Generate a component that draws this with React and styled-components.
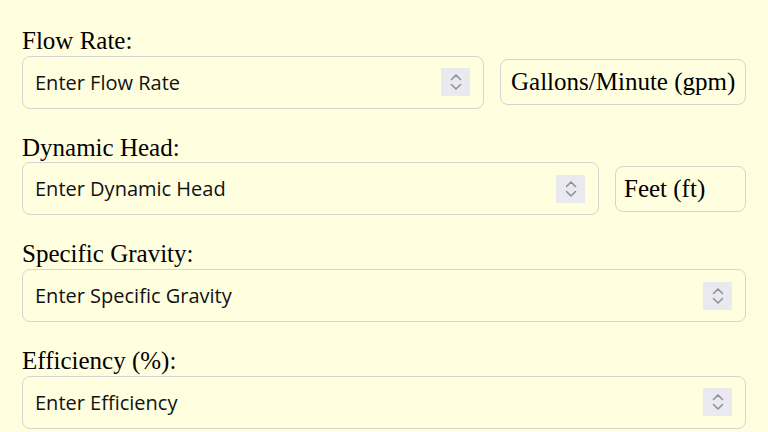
import React from "react";
import styled, { createGlobalStyle } from "styled-components";

const Global = createGlobalStyle`
  html, body { margin: 0; padding: 0; background: #ffffe0; }
  body { font-family: "Liberation Serif", "Times New Roman", serif; color: #000; }
`;

const Page = styled.div`
  padding: 27px 22px 0 22px;
  display: flex;
  flex-direction: column;
  gap: 25px;
`;

const Group = styled.div`
  display: flex;
  flex-direction: column;
`;

const Label = styled.label`
  font-size: 25px;
  line-height: 1.149;
  color: #000;
`;

const Row = styled.div`
  display: flex;
  align-items: center;
  gap: 16px;
`;

const Field = styled.div`
  flex: 1;
  height: 53px;
  box-sizing: border-box;
  border: 1.5px solid #d4d4d4;
  border-radius: 8px;
  background: #ffffe0;
  display: flex;
  align-items: center;
  padding: 0 13px 0 12px;
`;

const Input = styled.input`
  flex: 1;
  min-width: 0;
  border: none;
  outline: none;
  background: transparent;
  padding: 0;
  font-family: "Open Sans", "Noto Sans", sans-serif;
  font-size: 20px;
  font-weight: 500;
  color: #111;
  &::placeholder { color: #111; opacity: 1; }
`;

const Spinner = styled.span`
  width: 29px;
  height: 28px;
  background: #e9e9ef;
  display: flex;
  align-items: center;
  justify-content: center;
  flex-shrink: 0;
`;

const Unit = styled.div`
  width: ${(p) => p.$w}px;
  height: 46px;
  box-sizing: border-box;
  border: 1.5px solid #d4d4d4;
  border-radius: 8px;
  background: #ffffe0;
  display: flex;
  align-items: center;
  padding: 0 8px 0 ${(p) => p.$pl}px;
  font-size: 25px;
  white-space: nowrap;
  color: #000;
`;

function Arrows() {
  return (
    <svg width="16" height="22" viewBox="0 0 16 22" fill="none" stroke="#8e8e98" strokeWidth="1.5" strokeLinecap="round" strokeLinejoin="round">
      <path d="M3.5 8.5 L8 4 L12.5 8.5" />
      <path d="M3.5 13.5 L8 18 L12.5 13.5" />
    </svg>
  );
}

function NumberField({ placeholder }) {
  return (
    <Field>
      <Input type="text" placeholder={placeholder} />
      <Spinner><Arrows /></Spinner>
    </Field>
  );
}

export default function App() {
  return (
    <>
      <Global />
      <Page>
        <Group>
          <Label>Flow Rate:</Label>
          <Row>
            <NumberField placeholder="Enter Flow Rate" />
            <Unit $w={246} $pl={10}>Gallons/Minute (gpm)</Unit>
          </Row>
        </Group>
        <Group>
          <Label>Dynamic Head:</Label>
          <Row>
            <NumberField placeholder="Enter Dynamic Head" />
            <Unit $w={131} $pl={8}>Feet (ft)</Unit>
          </Row>
        </Group>
        <Group>
          <Label>Specific Gravity:</Label>
          <Row>
            <NumberField placeholder="Enter Specific Gravity" />
          </Row>
        </Group>
        <Group>
          <Label>Efficiency (%):</Label>
          <Row>
            <NumberField placeholder="Enter Efficiency" />
          </Row>
        </Group>
      </Page>
    </>
  );
}
